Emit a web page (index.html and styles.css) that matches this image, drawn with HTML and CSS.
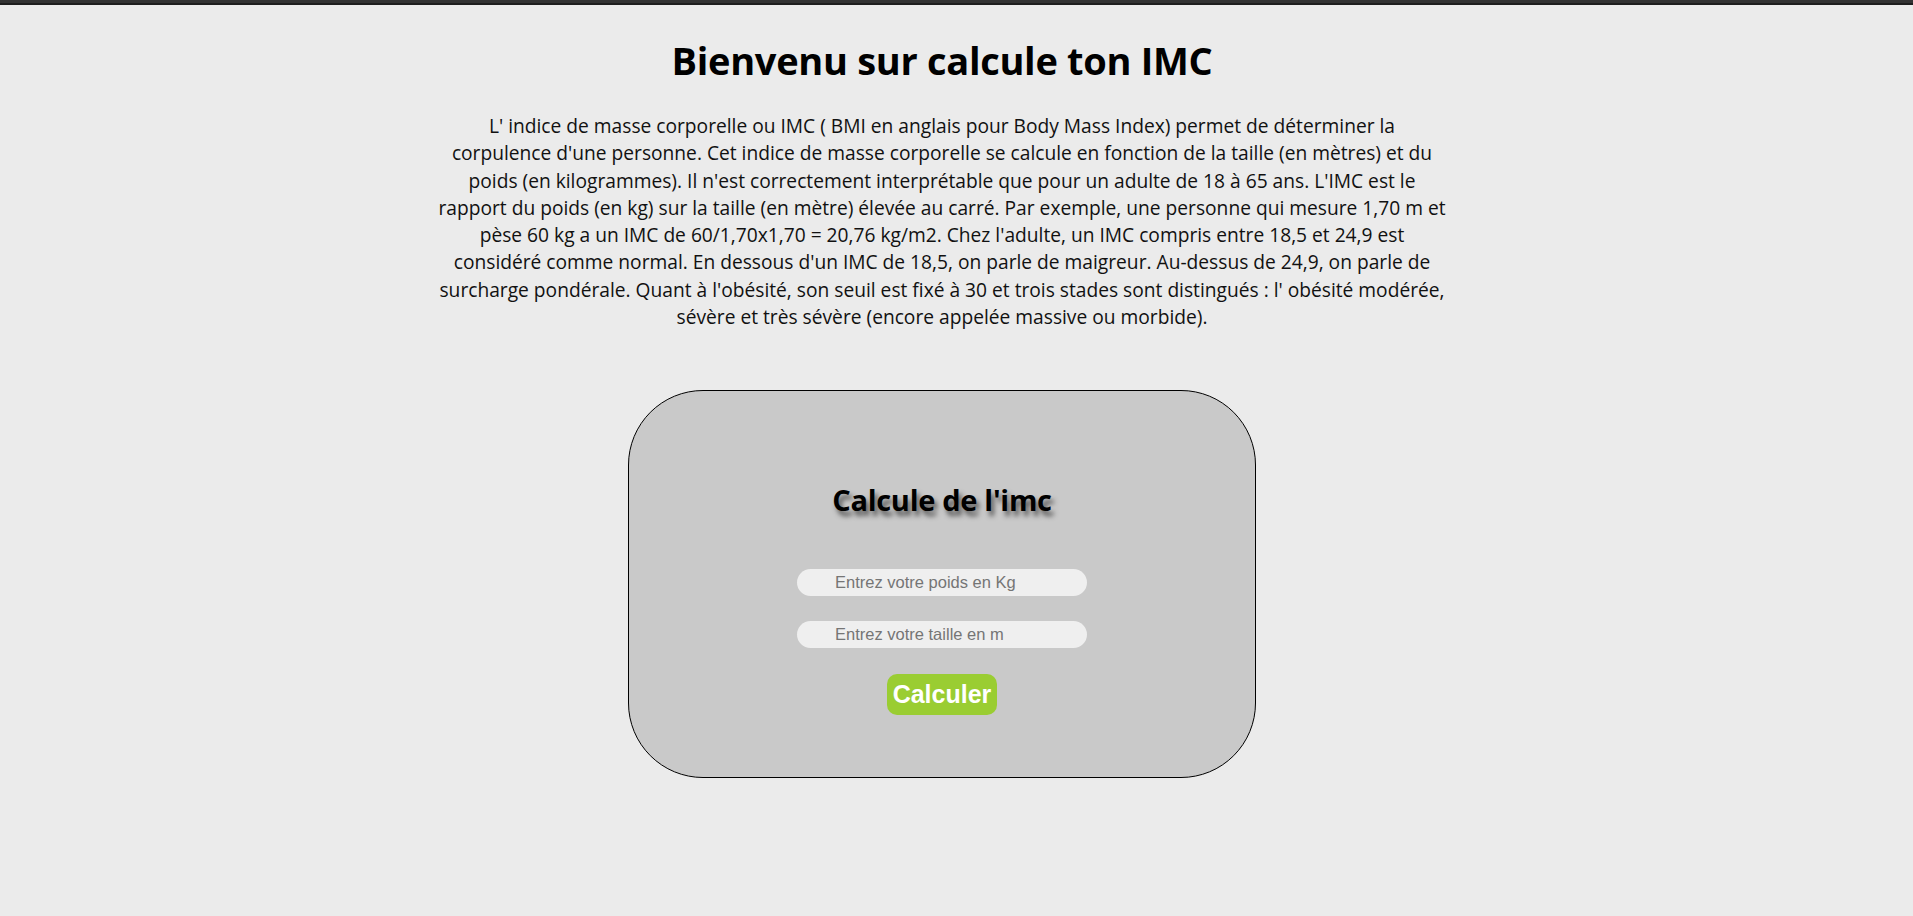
FILE: index.html
```html
<!DOCTYPE html>
<html lang="fr">
<head>
<meta charset="utf-8">
<title>Calcule ton IMC</title>
<link rel="stylesheet" href="styles.css">
</head>
<body>
<div class="topbar"></div>
<main class="page">
  <h1 class="title">Bienvenu sur calcule ton IMC</h1>
  <p class="intro">L' indice de masse corporelle ou IMC ( BMI en anglais pour Body Mass Index) permet de déterminer la<br>
  corpulence d'une personne. Cet indice de masse corporelle se calcule en fonction de la taille (en mètres) et du<br>
  poids (en kilogrammes). Il n'est correctement interprétable que pour un adulte de 18 à 65 ans. L'IMC est le<br>
  rapport du poids (en kg) sur la taille (en mètre) élevée au carré. Par exemple, une personne qui mesure 1,70 m et<br>
  pèse 60 kg a un IMC de 60/1,70x1,70 = 20,76 kg/m2. Chez l'adulte, un IMC compris entre 18,5 et 24,9 est<br>
  considéré comme normal. En dessous d'un IMC de 18,5, on parle de maigreur. Au-dessus de 24,9, on parle de<br>
  surcharge pondérale. Quant à l'obésité, son seuil est fixé à 30 et trois stades sont distingués : l' obésité modérée,<br>
  sévère et très sévère (encore appelée massive ou morbide).</p>
  <section class="card">
    <h2 class="card-title">Calcule de l'imc</h2>
    <input class="field" type="text" placeholder="Entrez votre poids en Kg">
    <input class="field" type="text" placeholder="Entrez votre taille en m">
    <button class="btn" type="button">Calculer</button>
  </section>
</main>
</body>
</html>
```

FILE: styles.css
```css
html, body {
  margin: 0;
  padding: 0;
}
body {
  background: #ebebeb;
  font-family: "Open Sans", "Noto Sans", sans-serif;
  color: #000;
  height: 916px;
  overflow: hidden;
}
.topbar {
  height: 3px;
  background: #333333;
  border-bottom: 2px solid #1e1e1e;
}
.page {
  padding-right: 29px;
  display: flex;
  flex-direction: column;
  align-items: center;
}
.title {
  margin: 29px 0 0;
  font-size: 38px;
  line-height: 52px;
  font-weight: 700;
  letter-spacing: -0.3px;
}
.intro {
  width: 1060px;
  margin: 26px 0 0;
  text-align: center;
  font-size: 19.2px;
  line-height: 27.3px;
  color: #111;
}
.card {
  box-sizing: border-box;
  width: 628px;
  height: 388px;
  margin-top: 60px;
  border: 1px solid #000;
  border-radius: 75px;
  background: #c9c9c9;
  display: flex;
  flex-direction: column;
  align-items: center;
  padding-top: 89px;
}
.card-title {
  margin: 0;
  font-size: 29px;
  line-height: 40px;
  font-weight: 700;
  text-shadow: 3px 5px 5px #555;
  letter-spacing: -0.3px;
}
.field {
  box-sizing: border-box;
  width: 290px;
  height: 27px;
  margin-top: 25px;
  border: none;
  border-radius: 14px;
  background: #efefef;
  padding: 0 0 0 38px;
  font-family: "Liberation Sans", Arial, sans-serif;
  font-size: 16.5px;
  color: #333;
  outline: none;
}
.card-title + .field {
  margin-top: 49px;
}
.field::placeholder {
  color: #757575;
}
.btn {
  margin-top: 26px;
  height: 41px;
  padding: 0 6px;
  border: none;
  border-radius: 10px;
  background: #9acd32;
  color: #fff;
  font-family: "Liberation Sans", Arial, sans-serif;
  font-weight: 700;
  font-size: 25px;
  cursor: pointer;
}
```
